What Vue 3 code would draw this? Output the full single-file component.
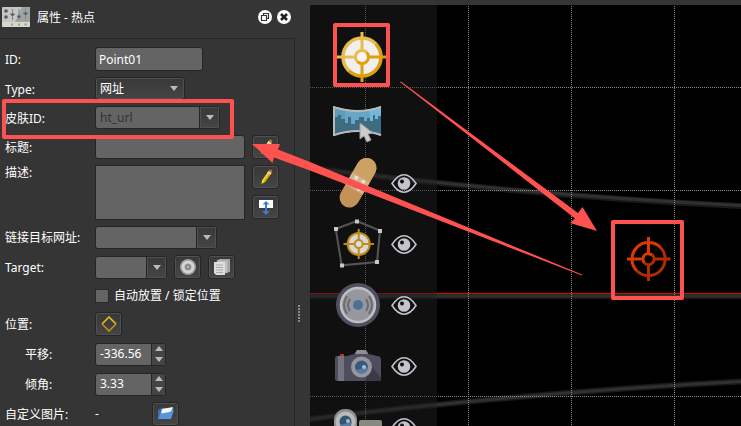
<script setup>
import { ref } from 'vue'

const pointId = ref('Point01')
const type = ref('url')
const skinId = ref('ht_url')
const title = ref('')
const description = ref('')
const link = ref('')
const target = ref('')
const locked = ref(false)
const pan = ref('-336.56')
const tilt = ref('3.33')

const step = (model, delta) => {
  model.value = (Number(model.value) + delta).toFixed(2)
}
const spinners = [
  { id: 'pan', label: '平移:', model: pan },
  { id: 'tilt', label: '倾角:', model: tilt },
]
const verticals = [365, 468, 571, 674, 777, 880, 983, 1086, 1189, 1292]
const horizontals = [87, 190, 396, 499, 602, 705]
const tools = ['hotspot', 'panorama', 'patch', 'polygon', 'sound', 'camera', 'video']
</script>

<template>
  <main class="app">
    <aside class="panel">
      <header class="head">
        <svg class="logo" viewBox="0 0 28 20" aria-hidden="true">
          <rect width="28" height="20" rx="1" fill="#c6c6c6" />
          <path d="M20 0H27Q28 0 28 1V15H13Z" fill="#a2a2a2" />
          <rect y="15" width="28" height="5" rx="1" fill="#d6d6d6" />
          <circle cx="4" cy="4" r="1.800" fill="#555" /><circle cx="4" cy="10" r="1.800" fill="#555" />
          <path d="M10.500 2V13M17 2V13M23.500 2V13" stroke="#7a848a" />
          <path d="M8.500 7H12.500L10.500 9ZM15 9H19L17 11ZM21.500 6H25.500L23.500 8Z" fill="#4b6577" stroke="#4b6577" />
          <path d="M9 17.500H11M16 17.500H18M22.500 17.500H24.500" stroke="#72c038" stroke-width="2" />
        </svg>
        <h1>属性 - 热点</h1>
        <button class="round" aria-label="浮动">
          <svg viewBox="0 0 14 14"><circle cx="7" cy="7" r="7" fill="#fff" /><path d="M5.500 5.500V3.500H10.500V8.500H8.500M3.500 5.500H8.500V10.500H3.500Z" fill="none" stroke="#333" stroke-width="1.200" /></svg>
        </button>
        <button class="round" aria-label="关闭">
          <svg viewBox="0 0 14 14"><circle cx="7" cy="7" r="7" fill="#fff" /><path d="M4 4L10 10M10 4L4 10" stroke="#222" stroke-width="2.600" /></svg>
        </button>
      </header>

      <form class="form" @submit.prevent>
        <div class="row">
          <label for="pid">ID:</label>
          <input id="pid" v-model="pointId" class="field id-field" type="text" />
        </div>
        <div class="row short">
          <label for="type">Type:</label>
          <span class="select-wrap">
            <select id="type" v-model="type"><option value="url">网址</option></select>
            <svg class="caret" viewBox="0 0 8 5"><path d="M0 0H8L4 5Z" fill="#bbb" /></svg>
          </span>
        </div>
        <div class="row short">
          <label for="skin">皮肤ID:</label>
          <span class="combo skin">
            <input id="skin" v-model="skinId" type="text" disabled />
            <button type="button" aria-label="皮肤ID"><svg class="caret" viewBox="0 0 8 5"><path d="M0 0H8L4 5Z" fill="#bbb" /></svg></button>
          </span>
        </div>
        <div class="row">
          <label for="title">标题:</label>
          <div class="controls">
            <input id="title" v-model="title" class="field wide" type="text" />
            <button type="button" class="tool" aria-label="编辑标题">
              <svg viewBox="0 0 16 16"><path d="M3.500 15L4 11.500L10.500 2L13.500 4L7 13Z" fill="#f3d62a" /><path d="M7 13L13.500 4L12 3L5.500 12Z" fill="#d7a514" /><path d="M9.500 3.500L10.500 2L13.500 4L12.500 5.500Z" fill="#ddd" /><path d="M10.500 2Q12-.5 14 1.500Q14.500 3 13.500 4Z" fill="#c66a45" /></svg>
            </button>
          </div>
        </div>
        <div class="row tall">
          <label for="desc">描述:</label>
          <div class="controls top">
            <textarea id="desc" v-model="description"></textarea>
            <div class="stack">
              <button type="button" class="tool" aria-label="编辑描述">
                <svg viewBox="0 0 16 16"><path d="M3.500 15L4 11.500L10.500 2L13.500 4L7 13Z" fill="#f8df22" /><path d="M7 13L13.500 4L12 3L5.500 12Z" fill="#dba916" /><path d="M9.500 3.500L10.500 2L13.500 4L12.500 5.500Z" fill="#ddd" /><path d="M10.500 2Q12-.5 14 1.500Q14.500 3 13.500 4Z" fill="#c66a45" /></svg>
              </button>
              <button type="button" class="tool" aria-label="调整高度">
                <svg viewBox="0 0 16 16"><rect x="1" y="1" width="14" height="8" fill="#fff" /><path d="M8 2L11.500 5.500H9V12H12L8 16L4 12H7V5.500H4.500Z" fill="#3e7bd0" /></svg>
              </button>
            </div>
          </div>
        </div>
        <div class="row">
          <label for="link">链接目标网址:</label>
          <span class="combo link">
            <input id="link" v-model="link" type="text" />
            <button type="button" aria-label="链接列表"><svg class="caret" viewBox="0 0 8 5"><path d="M0 0H8L4 5Z" fill="#bbb" /></svg></button>
          </span>
        </div>
        <div class="row">
          <label for="target">Target:</label>
          <div class="controls">
            <span class="combo target">
              <input id="target" v-model="target" type="text" />
              <button type="button" aria-label="Target"><svg class="caret" viewBox="0 0 8 5"><path d="M0 0H8L4 5Z" fill="#bbb" /></svg></button>
            </span>
            <button type="button" class="tool" aria-label="选择目标">
              <svg viewBox="0 0 16 16"><circle cx="8" cy="8" r="8" fill="#9b9b9b" /><circle cx="8" cy="8" r="5" fill="none" stroke="#d5d5d5" stroke-width="3" /><circle cx="8" cy="8" r="2" fill="#b7b7b7" stroke="#777" /></svg>
            </button>
            <button type="button" class="tool" aria-label="复制">
              <svg viewBox="0 0 16 16"><path d="M5 0H16V13H5Z" fill="#aaa" /><path d="M3 1H14V14H3Z" fill="#bfbfbf" stroke="#888" stroke-width=".5" /><path d="M0 3H11V16H2L0 14Z" fill="#ddd" /><path d="M2 6H9M2 8.500H9M2 11H9M2 13.500H9" stroke="#aaa" /></svg>
            </button>
          </div>
        </div>
        <div class="row check">
          <span></span>
          <label><input v-model="locked" type="checkbox" />自动放置 / 锁定位置</label>
        </div>
        <div class="row">
          <span class="name">位置:</span>
          <button type="button" class="tool" aria-label="位置">
            <svg viewBox="0 0 16 16"><path d="M1 8L8 1L15 8" fill="none" stroke="#f2c318" stroke-width="1.500" /><path d="M1 8L8 15L15 8" fill="none" stroke="#c49313" stroke-width="1.500" /></svg>
          </button>
        </div>
        <div v-for="s in spinners" :key="s.id" class="row indent">
          <label :for="s.id">{{ s.label }}</label>
          <span class="combo spin">
            <input :id="s.id" v-model="s.model.value" type="text" inputmode="decimal" />
            <span class="steps">
              <button type="button" aria-label="增加" @click="step(s.model, 1)"><svg class="caret" viewBox="0 0 8 5"><path d="M0 5H8L4 0Z" fill="#bbb" /></svg></button>
              <button type="button" aria-label="减少" @click="step(s.model, -1)"><svg class="caret" viewBox="0 0 8 5"><path d="M0 0H8L4 5Z" fill="#bbb" /></svg></button>
            </span>
          </span>
        </div>
        <div class="row">
          <span class="name">自定义图片:</span>
          <div class="controls">
            <span class="file">-</span>
            <button type="button" class="tool" aria-label="打开图片">
              <svg viewBox="0 0 16 16"><path d="M0 4L4 2H16L12 13H0Z" fill="#3a70b5" /><path d="M4 3L15 1L12 9L2 11Z" fill="#f4f4f4" /><path d="M0 13L3 7Q9 8 16 4L13 13Z" fill="#5794e0" /></svg>
            </button>
          </div>
        </div>
      </form>
    </aside>
    <div class="gutter"><span class="grip"></span></div>

    <section class="canvas">
      <svg class="scene" aria-hidden="true">
        <g transform="translate(-310 -5)">
          <g fill="none">
            <path d="M310 168Q530 196 741 206T1600 232" stroke="#191919" stroke-width="6" />
            <path d="M310 168Q530 195.500 741 205.500T1600 231" stroke="#303030" stroke-width="3" />
            <path d="M310 296H2000" stroke="#191919" stroke-width="6" />
            <path d="M310 296H2000" stroke="#303030" stroke-width="3" />
            <path d="M310 419Q520 393 741 381.500T1600 350" stroke="#191919" stroke-width="6" />
            <path d="M310 419Q520 393 741 381.500T1600 350" stroke="#303030" stroke-width="3" />
          </g>
          <g stroke="#8c8c8c" stroke-dasharray="1 1" shape-rendering="crispEdges">
            <line v-for="x in verticals" :key="'v' + x" :x1="x + 0.5" :x2="x + 0.5" y1="6" y2="1600" />
            <line v-for="y in horizontals" :key="'h' + y" :y1="y + 0.5" :y2="y + 0.5" x1="310" x2="2400" />
          </g>
          <path d="M310 293.500H2400" stroke="#e40505" />
          <g fill="none" stroke-width="3">
            <g stroke="#dc3902">
              <path d="M632 259A16.500 16.500 0 0 1 648.500 242.500A16.500 16.500 0 0 1 660.500 247.500M627 259H643M648.500 237V253" />
              <path d="M643 259A5.500 5.500 0 0 1 648.500 253.500L652.500 255" />
              <path d="M632 259A16.500 16.500 0 0 0 637 271M643 259A5.500 5.500 0 0 0 644.500 263" />
            </g>
            <g stroke="#b22c02">
              <path d="M660 247A16.500 16.500 0 0 1 637 271M654 259H670.500M648.500 264.500V281" />
              <path d="M652.500 255A5.500 5.500 0 0 1 644.500 263" />
            </g>
          </g>
        </g>
      </svg>

      <nav class="toolbar">
        <div v-for="(tool, i) in tools" :key="tool" class="tool-row">
          <button class="icon-button" :aria-label="tool">
            <svg viewBox="0 0 56 61">
              <defs v-if="tool === 'hotspot'">
                <linearGradient id="gold" x1="0" y1="0" x2="1" y2="1"><stop offset=".5" stop-color="#e8bc4e" /><stop offset=".5" stop-color="#dfa00d" /></linearGradient>
              </defs>
              <template v-if="tool === 'hotspot'">
                <circle cx="32" cy="26" r="19" fill="#f1f0ef" stroke="url(#gold)" stroke-width="3.500" />
                <path d="M32 1V20M7 26H26" stroke="#e8bc4e" stroke-width="3" />
                <path d="M32 32V51M38 26H57" stroke="#dfa00d" stroke-width="3" />
                <circle cx="32" cy="26" r="6.500" fill="#f5f5f5" stroke="url(#gold)" stroke-width="3" />
              </template>
              <template v-else-if="tool === 'panorama'">
                <path d="M4 14Q28 23 51 14V44Q28 35 4 44Z" fill="#5b9cb9" />
                <path d="M15 17Q28 20 40 17V41Q28 38 15 41Z" fill="#67a7c5" />
                <path d="M40 17L51 15V43L40 40Z" fill="#73b8d8" />
                <path d="M4 25H8V23H11V27H15V31H18V25H21V32H25V28H29V25H34V29H37V26H40V29H43V23H45V27H48V24H51V43Q28 35 4 43Z" fill="#3d6b80" />
                <path d="M4 14V44M4 15Q28 23 51 15M4 43Q28 35 51 43" fill="none" stroke="#b7babd" stroke-width="2" />
                <path d="M30 31L43 41L38 42L41 48L37 50L34 44L30 47Z" fill="#ccc" stroke="#999" />
              </template>
              <template v-else-if="tool === 'patch'">
                <path d="M36.500 15L19.500 44.500" stroke="#c49158" stroke-width="20" stroke-linecap="round" />
                <path d="M36.500 15L29 28" stroke="#cda064" stroke-width="20" stroke-linecap="round" />
                <path d="M31 24.500L24 36.500" stroke="#d3b389" stroke-width="20" />
                <g fill="#e4e2df"><circle cx="26.300" cy="24.700" r="2" /><circle cx="33.300" cy="28.700" r="2" /><circle cx="22" cy="31" r="2" /><circle cx="29" cy="36" r="2" /></g>
              </template>
              <template v-else-if="tool === 'polygon'">
                <path d="M26.700 7L50 16.700L47 48L11.700 51.300L5.700 15Z" fill="none" stroke="#555" stroke-width="2" />
                <path d="M25 5.500h4v4h-4zM48 15h4v4h-4zM45 46h4v4h-4zM10 49.500h4v4h-4zM4 13h4v4h-4z" fill="#c9c9c9" />
                <circle cx="28.700" cy="30" r="11" fill="#d9d8d6" stroke="#bd8c16" stroke-width="2" />
                <path d="M28.700 15V26M28.700 34V45M13.500 30H25M32.500 30H44" stroke="#bd8c16" stroke-width="2" />
                <circle cx="28.700" cy="30" r="4" fill="#ddd" stroke="#bd8c16" stroke-width="2" />
              </template>
              <template v-else-if="tool === 'sound'">
                <circle cx="28" cy="30" r="22" fill="#505061" />
                <circle cx="28" cy="30" r="17" fill="#96989d" stroke="#bcbfc4" stroke-width="2.500" />
                <path d="M20 24Q16 30 20 36M17 21Q11 30 17 39M36 24Q40 30 36 36M39 21Q45 30 39 39" fill="none" stroke="#696b71" stroke-width="2" />
                <circle cx="28" cy="30" r="5" fill="#4d6f94" />
              </template>
              <template v-else-if="tool === 'camera'">
                <path d="M24 19L27 14H36L39 19Z" fill="#8e8f96" />
                <path d="M10 18H14V21H10Z" fill="#c92d14" />
                <path d="M7 20H17L24 18H39L47 20Q51 20 51 24V43Q51 45 49 45H7Q5 45 5 43V22Q5 20 7 20Z" fill="#4d4d5e" />
                <path d="M37 40L41 29L51 42V45H35Z" fill="#3b3b48" />
                <path d="M8 20H14V45H8Z" fill="#737380" />
                <circle cx="31.500" cy="31" r="8.500" fill="#375a78" stroke="#96979e" stroke-width="4" />
                <path d="M26 34A6 6 0 0 0 37.500 31Z" fill="#557b9d" /><circle cx="34" cy="31" r="2" fill="#a6bdd2" />
              </template>
              <template v-else>
                <rect x="4" y="12" width="23" height="32" rx="11" fill="#8e8e8e" />
                <rect x="29" y="23" width="23" height="20" rx="2" fill="#89897f" />
                <circle cx="15.500" cy="24.500" r="8" fill="#355571" stroke="#babab7" stroke-width="4" />
                <path d="M10 28A6 6 0 0 0 21.500 25Z" fill="#557b9d" /><circle cx="18" cy="24" r="2" fill="#a6bdd2" />
              </template>
            </svg>
          </button>
          <button v-if="i > 1" class="eye" aria-label="显示">
            <svg viewBox="0 0 26 20"><path d="M1 9.500C5 3.500 9 .8 13 .8S21 3.500 25 9.500C21 15.500 17 18.200 13 18.200S5 15.500 1 9.500Z" fill="none" stroke="#c4c3ce" stroke-width="1.600" /><circle cx="13" cy="9.500" r="6.300" fill="#c4c3ce" /><circle cx="11" cy="7.500" r="2" fill="#111" /></svg>
          </button>
        </div>
      </nav>
    </section>

    <svg class="annotations" aria-hidden="true">
      <g fill="none" stroke="#fe5251" stroke-width="4" stroke-linejoin="round">
        <rect x="4" y="101" width="228" height="36" />
        <rect x="335" y="25" width="53" height="60" />
        <rect x="613" y="222" width="69" height="76" />
      </g>
      <g fill="#fe5251">
        <path d="M400 82L401 81.500L578 213L582.500 207L597 231L570 223L575 218.500Z" />
        <path d="M582 275.500L582 274.500L310 162L278 149.500L280 144L252 144L272.500 163L274 157.500L310 170.500Z" />
      </g>
    </svg>
  </main>
</template>

<style>
body {
  margin: 0;
  background: #353535;
}
</style>

<style scoped>
* {
  box-sizing: border-box;
}
.app {
  position: relative;
  display: flex;
  height: 100vh;
  overflow: hidden;
  background: #353535;
  color: #fff;
  font: 12px/16px "Noto Sans", "Noto Sans CJK SC", sans-serif;
}
button,
input,
select,
textarea {
  margin: 0;
  padding: 0;
  border: 0;
  font: inherit;
  color: inherit;
  outline: 0;
}
svg {
  display: block;
}
.panel {
  flex: none;
  width: 295px;
}
.head {
  display: flex;
  align-items: center;
  gap: 5px;
  height: 38px;
  padding: 0 4px 4px 2px;
}
.logo {
  width: 28px;
  height: 20px;
}
h1 {
  flex: 1;
  margin: 0;
  padding: 2px 0 0 2px;
  font: inherit;
}
.round {
  width: 14px;
  height: 14px;
  background: none;
}
.form {
  padding: 5px 0 0 5px;
  border: 1px solid #262626;
  border-width: 1px 1px 0 0;
}
.row {
  display: grid;
  grid-template-columns: 90px 1fr;
  align-items: center;
  justify-items: start;
  height: 30px;
  white-space: nowrap;
}
.row > label,
.name {
  padding-top: 2px;
}
.row.short {
  height: 29px;
}
.row.tall {
  align-items: start;
  height: 60px;
  padding-top: 3px;
}
.row.tall > label {
  padding-top: 0;
}
.row.check {
  height: 27px;
}
.row.indent > label {
  padding-left: 20px;
}
.controls {
  display: flex;
  align-items: center;
  gap: 7px;
}
.controls.top {
  align-items: flex-start;
}
.field,
textarea,
.combo,
select {
  border: 1px solid #252525;
  border-radius: 3px;
  background: #646464;
}
.field {
  height: 24px;
  padding: 0 3px;
}
.id-field {
  width: 108px;
}
.wide {
  width: 150px;
}
textarea {
  display: block;
  width: 150px;
  height: 55px;
  border-radius: 0;
  resize: none;
}
.select-wrap {
  position: relative;
}
select {
  display: block;
  appearance: none;
  width: 90px;
  height: 23px;
  padding: 0 4px;
  background: linear-gradient(#383838, #454545);
  box-shadow: inset 0 0 0 1px #505050;
}
.caret {
  width: 8px;
  height: 5px;
}
.select-wrap .caret {
  position: absolute;
  top: 9px;
  right: 7px;
  pointer-events: none;
}
.combo {
  display: flex;
  height: 23px;
  overflow: hidden;
}
.combo input {
  flex: 1;
  min-width: 0;
  padding: 0 4px;
  background: none;
}
.combo input:disabled {
  color: #333;
}
.combo > button {
  display: grid;
  place-items: center;
  width: 20px;
  border-left: 1px solid #252525;
  background: linear-gradient(#383838, #454545);
  box-shadow: inset 0 0 0 1px #505050;
}
.skin {
  width: 125px;
}
.link {
  width: 122px;
}
.target {
  width: 72px;
}
.spin {
  width: 71px;
}
.steps {
  display: flex;
  flex-direction: column;
  width: 14px;
  border-left: 1px solid #252525;
  background: #444;
}
.steps button {
  flex: 1;
  display: grid;
  place-items: center;
  background: none;
}
.tool {
  display: grid;
  place-items: center;
  width: 27px;
  height: 24px;
  border: 1px solid #252525;
  border-radius: 3px;
  background: linear-gradient(#383838, #454545);
  box-shadow: inset 0 0 0 1px #505050;
}
.tool svg {
  width: 16px;
  height: 16px;
}
.stack {
  display: grid;
  gap: 6px;
}
.check label {
  display: flex;
  align-items: center;
  gap: 5px;
  padding-top: 0;
}
.check input {
  appearance: none;
  width: 14px;
  height: 14px;
  border: 1px solid #292929;
  background: #646464;
}
.check input:checked {
  background: #ddd;
}
.file {
  width: 50px;
}
.gutter {
  display: grid;
  place-items: center;
  flex: none;
  width: 15px;
  padding: 201px 7px 0 0;
}
.grip {
  width: 2px;
  height: 17px;
  background: repeating-linear-gradient(#888 0 2px, transparent 2px 3px);
}
.canvas {
  position: relative;
  flex: 1;
  min-width: 0;
  margin-top: 5px;
  background: #000;
}
.scene,
.annotations {
  position: absolute;
  inset: 0;
  width: 100%;
  height: 100%;
}
.annotations {
  pointer-events: none;
}
.toolbar {
  position: relative;
  width: 127px;
  height: 100%;
  padding: 26px 0 0 20px;
  overflow: hidden;
  background: rgba(32, 32, 32, 0.5);
}
.tool-row {
  display: flex;
  align-items: center;
  gap: 5px;
  height: 61px;
}
.icon-button,
.eye {
  background: none;
}
.icon-button svg {
  width: 56px;
  height: 61px;
  overflow: visible;
}
.eye svg {
  width: 26px;
  height: 20px;
}
</style>
